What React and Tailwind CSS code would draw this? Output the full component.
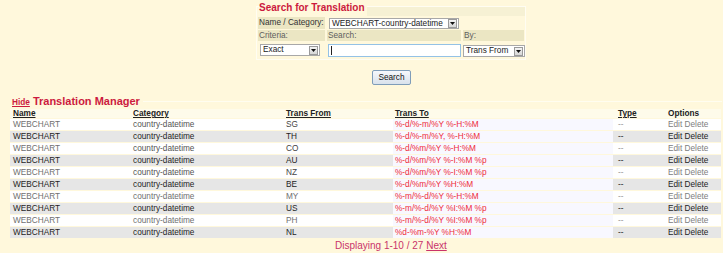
import React from "react";

const rows = [
  ["SG", "%-d/%-m/%Y %-H:%M"],
  ["TH", "%-d/%-m/%Y, %-H:%M"],
  ["CO", "%-d/%m/%Y %-H:%M"],
  ["AU", "%-d/%m/%Y %-I:%M %p"],
  ["NZ", "%-d/%m/%Y %-I:%M %p"],
  ["BE", "%-d/%m/%Y %H:%M"],
  ["MY", "%-m/%-d/%Y %-H:%M"],
  ["US", "%-m/%-d/%Y %I:%M %p"],
  ["PH", "%-m/%-d/%Y %I:%M %p"],
  ["NL", "%d-%m-%Y %H:%M"],
];

function Arrow() {
  return (
    <div className="w-[9px] h-[9px] border border-[#9a9a9a] bg-gradient-to-b from-[#f4f4f4] to-[#d6d6d6] flex items-center justify-center shrink-0">
      <svg width="5" height="3" viewBox="0 0 5 3">
        <path d="M0 0H5L2.5 3Z" fill="#111" />
      </svg>
    </div>
  );
}

function Select({ className, text }) {
  return (
    <div className={"bg-white border border-[#a8a8a8] flex items-center justify-between pl-[2px] pr-[1px] text-[#222] " + className}>
      <span className="leading-[10px] whitespace-nowrap">{text}</span>
      <Arrow />
    </div>
  );
}

export default function App() {
  return (
    <div className="w-[723px] h-[253px] overflow-hidden bg-[#fff8dc] font-['Liberation_Sans',Arial,sans-serif] text-[8.25px] flex flex-col">
      {/* Search panel */}
      <div className="ml-[256px] mt-[6px] w-[270px] border-x border-b border-[#fffdf2] flex flex-col">
        <div className="flex items-start h-[10px]">
          <div className="w-[2px] border-t border-[#fffdf2]" />
          <div className="-mt-[4px] h-[12px] leading-[12px] text-[10px] font-bold text-[#cc1a3e] whitespace-nowrap">
            Search for Translation
          </div>
          <div className="ml-[2px] flex-1 h-[10px] border-t border-[#fffdf2] bg-[#f6f1d4]" />
        </div>
        <div className="mt-[1px] flex h-[12px]">
          <div className="ml-[1px] w-[67px] bg-[#ebe6c3] pl-[1px] leading-[12px] text-[#333]">Name / Category:</div>
          <Select className="ml-[4px] mt-[1px] w-[130px] h-[11px]" text="WEBCHART-country-datetime" />
        </div>
        <div className="mt-[1px] ml-[1px] flex gap-[2px] h-[11px] text-[#5e5e5e] leading-[11px]">
          <div className="w-[67px] bg-[#ebe6c3] pl-[1px]">Criteria:</div>
          <div className="w-[134px] bg-[#ebe6c3] pl-[1px]">Search:</div>
          <div className="w-[61px] bg-[#ebe6c3] pl-[1px]">By:</div>
        </div>
        <div className="mt-[2px] mb-[2px] flex h-[14px]">
          <Select className="ml-[3px] mt-[1px] w-[60px] h-[12px]" text="Exact" />
          <div className="ml-[8px] mt-[1px] w-[133px] h-[13px] bg-white border border-[#94c2e6] flex items-center pl-[2px]">
            <div className="w-[1px] h-[9px] bg-[#222]" />
          </div>
          <Select className="ml-[2px] mt-[2px] w-[62px] h-[12px]" text="Trans From" />
        </div>
      </div>

      {/* Search button */}
      <div className="mt-[10px] ml-[372px]">
        <div className="w-[39px] h-[15px] rounded-[2px] border border-[#7f9db9] bg-gradient-to-b from-[#f6f8fb] to-[#d9e2ec] flex items-center justify-center text-[#111] leading-[10px]">
          Search
        </div>
      </div>

      {/* Manager title */}
      <div className="mt-[10px] flex items-start h-[14px]">
        <span className="ml-[12px] mt-[3px] leading-[10px] font-bold underline text-[#cc1a3e]">Hide</span>
        <span className="ml-[3px] leading-[13px] text-[11px] font-bold text-[#cc1a3e] whitespace-nowrap">Translation Manager</span>
        <div className="ml-[3px] mt-[6px] flex-1 h-[1px] bg-[#fffdf0] mr-[1px]" />
      </div>

      {/* Table */}
      <div className="ml-[10px] w-[711px] flex flex-col gap-[1px]">
        <div className="flex h-[9px] leading-[9px] font-bold text-[#222] bg-[#fefbea]">
          <div className="w-[121px] pl-[3px] underline">Name</div>
          <div className="w-[152px] pl-[2px] underline">Category</div>
          <div className="w-[110px] pl-[3px] underline">Trans From</div>
          <div className="w-[220px] pl-[2px] underline">Trans To</div>
          <div className="w-[53px] pl-[5px] underline">Type</div>
          <div className="w-[54px] pl-[2px]">Options</div>
        </div>
        {rows.map(([code, fmt], i) => {
          const gray = i % 2 === 1;
          const light = i === 6 || i === 8;
          return (
            <div
              key={code}
              className={
                "flex h-[11px] leading-[11px] " + (gray ? "bg-[#e6e6e6] text-[#1e1e1e]" : "bg-white")
              }
            >
              <div className={"w-[121px] pl-[3px] " + (gray ? "" : "text-[#707070]")}>WEBCHART</div>
              <div className={"w-[152px] pl-[2px] " + (gray ? "" : light ? "text-[#707070]" : "text-[#555]")}>country-datetime</div>
              <div className={"w-[110px] pl-[3px] " + (gray ? "" : light ? "text-[#707070]" : "text-[#444]")}>{code}</div>
              <div className="w-[220px] pl-[2px] bg-[#f8f8ff] text-[#ee2b3b]">{fmt}</div>
              <div className={"w-[53px] pl-[5px] " + (gray ? "" : "text-[#999]")}>--</div>
              <div className={"w-[54px] pl-[2px] whitespace-nowrap " + (gray ? "" : "text-[#808080]")}>Edit Delete</div>
            </div>
          );
        })}
      </div>

      {/* Footer */}
      <div className="mt-[2px] pl-[335px] text-[10px] leading-[12px] text-[#c9336a] whitespace-nowrap">
        Displaying 1-10 / 27 <span className="underline">Next</span>
      </div>
    </div>
  );
}
